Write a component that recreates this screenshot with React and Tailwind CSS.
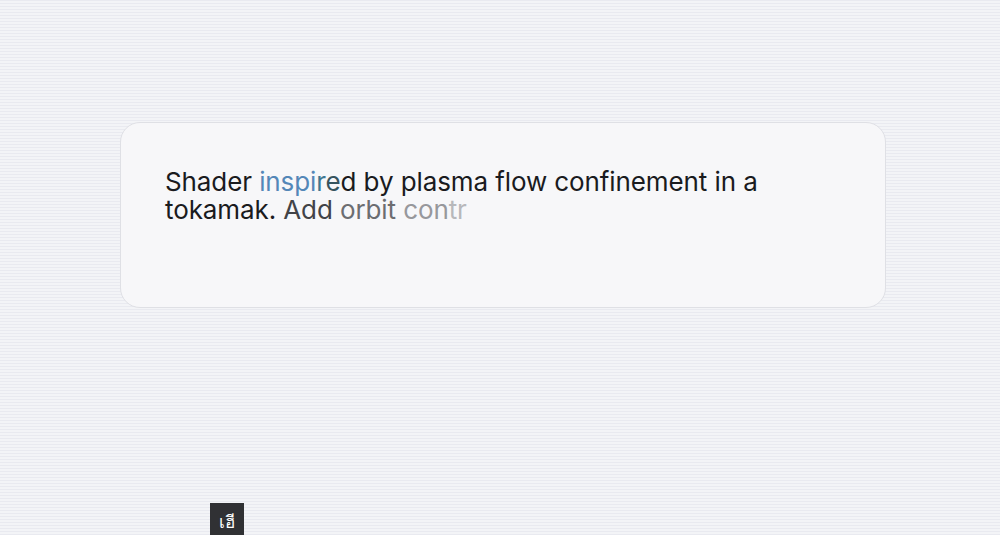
export default function App() {
  return (
    <div className="relative h-[535px] w-[1000px] overflow-hidden bg-[#eff0f4] bg-[repeating-linear-gradient(180deg,#e9eaf0_0px,#e9eaf0_1px,#f3f4f7_1px,#f3f4f7_3px)] font-['Inter','Roboto',sans-serif]">
      <div className="pt-[122px]">
        <div className="ml-[120px] h-[186px] w-[766px] rounded-[20px] border border-[#dfe0e5] bg-[#f7f7f9] pl-[44px] pt-[45px]">
          <p className="text-[26px] leading-[28px] tracking-[-0.1px] text-[#1a1b1e]">
            Shader{" "}
            <span className="text-[#5487b8]">inspi</span>
            <span className="text-[#3f7892]">r</span>
            <span className="text-[#36545f]">e</span>
            d by plasma flow confinement in a
            <br />
            tokamak. <span className="text-[#424347]">Add</span>{" "}
            <span className="text-[#6c6d71]">orbit</span>{" "}
            <span className="text-[#97989c]">con</span>
            <span className="text-[#b7b8bb]">tr</span>
          </p>
        </div>
      </div>
      <div className="absolute left-[210px] top-[503px] flex h-[32px] w-[34px] items-center justify-center bg-[#303134] pt-[4px] font-['Noto_Sans','DejaVu_Sans',sans-serif] text-[17px] leading-none text-white">
        เฮี
      </div>
    </div>
  );
}
